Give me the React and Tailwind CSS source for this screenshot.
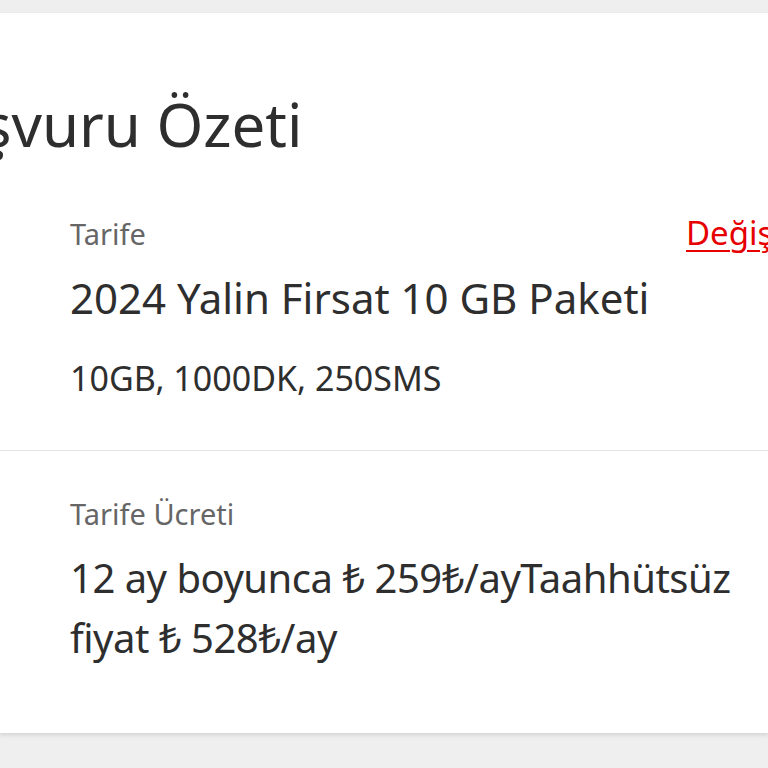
const font = { fontFamily: '"Noto Sans", "DejaVu Sans", sans-serif' };

function Row({ label, children, action }) {
    return (
        <div className="flex items-start pl-[70px]">
            <div className="w-[616px] shrink-0">
                <div className="text-[29px] leading-[34px] text-[#666666]">{label}</div>
                {children}
            </div>
            {action}
        </div>
    );
}

export default function App() {
    return (
        <div className="h-[768px] w-[768px] overflow-hidden bg-[#efefef] pt-[13px]" style={font}>
            <div className="h-[720px] bg-white shadow-[0_2px_4px_rgba(0,0,0,0.12)]">
                <h1 className="ml-[-90px] pt-[76px] text-[60px] leading-[70px] whitespace-nowrap text-[#2e2e2e]">
                    Başvuru Özeti
                </h1>
                <div className="pt-[58px] pb-[52px]">
                    <Row
                        label="Tarife"
                        action={
                            <a href="#" className="mt-[-4px] shrink-0 text-[33px] leading-[40px] text-[#e60000] underline decoration-2 underline-offset-[5px] whitespace-nowrap">
                                Değiştir
                            </a>
                        }
                    >
                        <div className="mt-[22px] text-[42px] leading-[50px] text-[#2e2e2e] whitespace-nowrap">
                            2024 Yalin Firsat 10 GB Paketi
                        </div>
                        <div className="mt-[35px] text-[34px] leading-[40px] text-[#2e2e2e] whitespace-nowrap">
                            10GB, 1000DK, 250SMS
                        </div>
                    </Row>
                </div>
                <div className="border-t border-[#e4e4e4] pt-[46px]">
                    <Row label="Tarife Ücreti">
                        <div className="mt-[17px] w-[680px] text-[40px] leading-[60px] tracking-[-0.5px] text-[#2e2e2e]">
                            12 ay boyunca ₺ 259₺/ayTaahhütsüz fiyat ₺ 528₺/ay
                        </div>
                    </Row>
                </div>
            </div>
        </div>
    );
}
